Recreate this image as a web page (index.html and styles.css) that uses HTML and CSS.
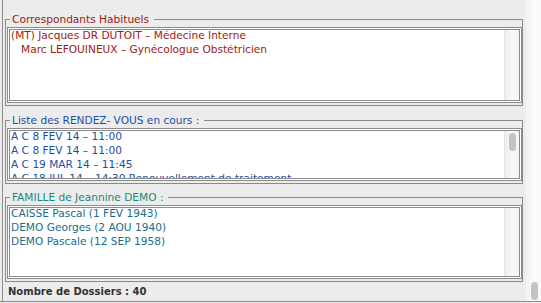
FILE: index.html
```html
<!DOCTYPE html>
<html lang="fr">
<head>
    <meta charset="UTF-8">
    <title>Dossier patient</title>
    <link rel="stylesheet" href="styles.css">
</head>
<body>
    <div class="window">
        <div class="main">
            <fieldset class="group corr">
                <legend>Correspondants Habituels</legend>
                <div class="listbox tall">
                    <ul class="items">
                        <li>(MT) Jacques DR DUTOIT – Médecine Interne</li>
                        <li>   Marc LEFOUINEUX – Gynécologue Obstétricien</li>
                    </ul>
                    <div class="track"></div>
                </div>
            </fieldset>
            <fieldset class="group rdv">
                <legend>Liste des RENDEZ- VOUS en cours :</legend>
                <div class="listbox short">
                    <ul class="items">
                        <li>A C 8 FEV 14 – 11:00</li>
                        <li>A C 8 FEV 14 – 11:00</li>
                        <li>A C 19 MAR 14 – 11:45</li>
                        <li>A C 18 JUL 14 – 14:30 Renouvellement de traitement</li>
                    </ul>
                    <div class="track"><div class="thumb"></div></div>
                </div>
            </fieldset>
            <fieldset class="group famille">
                <legend>FAMILLE de Jeannine DEMO :</legend>
                <div class="listbox medium">
                    <ul class="items">
                        <li>CAISSE Pascal (1 FEV 1943)</li>
                        <li>DEMO Georges (2 AOU 1940)</li>
                        <li>DEMO Pascale (12 SEP 1958)</li>
                    </ul>
                    <div class="track"></div>
                </div>
            </fieldset>
            <div class="status">Nombre de Dossiers : 40</div>
        </div>
        <div class="vscroll">
            <div class="vthumb"></div>
        </div>
    </div>
</body>
</html>
```

FILE: styles.css
```css
body {
    margin: 0;
    padding: 0;
    background-color: #ececec;
    font-family: "DejaVu Sans", Verdana, sans-serif;
    font-size: 10.6px;
}
.window {
    display: flex;
    height: 301px;
    border-bottom: 1px solid #8a8a8a;
}
.main {
    flex: 1;
    display: flex;
    flex-direction: column;
    margin-left: 2px;
    padding-top: 12px;
    border-left: 1px solid #8e8e8e;
}
.group {
    margin: 0 3px 6px 2px;
    padding: 1px 0 2px 1px;
    min-width: 0;
    border: 1px solid #8a8a8a;
}
.group legend {
    margin-left: 3px;
    padding: 0 5px 0 2px;
    line-height: 14px;
}
.corr {
    margin-bottom: 7px;
}
.corr legend,
.corr .items {
    color: #9a1b16;
}
.rdv legend,
.rdv .items {
    color: #1b4fa6;
}
.famille legend {
    color: #22887a;
}
.famille .items {
    color: #1a6c8c;
}
.listbox {
    display: flex;
    background: white;
    border: 3px double #8c8c8c;
    overflow: hidden;
}
.listbox.tall {
    height: 70px;
}
.listbox.short {
    height: 47px;
}
.listbox.medium {
    height: 68px;
}
.items {
    flex: 1;
    list-style: none;
    margin: -2px 0 0 0;
    padding: 0 0 0 1px;
    line-height: 14px;
    overflow: hidden;
}
.items li {
    white-space: pre;
}
.track {
    width: 14px;
    border-left: 1px solid #e4e4e4;
    background: linear-gradient(to right, #eeeeee, #f9f9f9 50%, #f4f4f4);
    display: flex;
    justify-content: center;
}
.thumb {
    width: 7px;
    height: 18px;
    margin-top: 2px;
    border-radius: 4px;
    background-color: #c3c3c3;
}
.status {
    margin-top: -6px;
    flex: 1;
    display: flex;
    align-items: center;
    padding-left: 5px;
    font-size: 10px;
    font-weight: bold;
    color: #333;
}
.vscroll {
    width: 14px;
    border-left: 1px solid #f4f4f4;
    background: linear-gradient(to right, #f2f2f2, #fcfcfc 50%, #f7f7f7);
    display: flex;
    flex-direction: column;
    justify-content: flex-end;
    align-items: center;
}
.vthumb {
    width: 7px;
    height: 18px;
    margin-bottom: 1px;
    border-radius: 4px;
    background-color: #c3c3c3;
}
```
